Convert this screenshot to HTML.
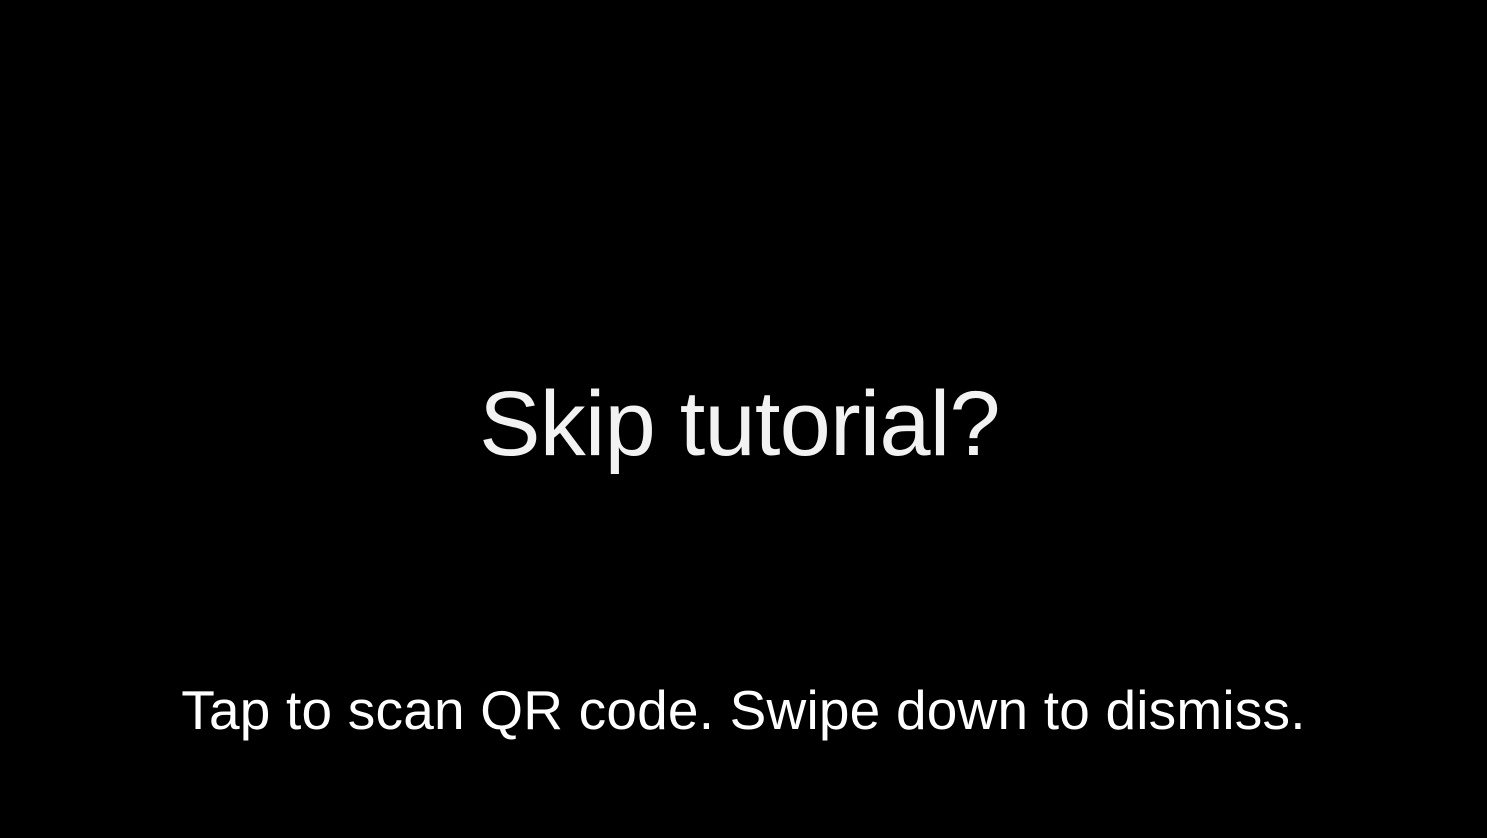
<!DOCTYPE html>
<html><head><meta charset="utf-8"><style>
html,body{margin:0;padding:0;background:#000;width:1487px;height:838px;overflow:hidden}
div{position:absolute;left:0;width:1487px;text-align:center;color:#fff;font-family:"Liberation Sans",sans-serif;line-height:1;white-space:nowrap}
.t{top:378px;font-size:92px;color:#f2f2f2;letter-spacing:-0.8px;left:-4px}
.b{top:683px;font-size:55px;left:0px;letter-spacing:0.2px}
</style></head><body>
<div class="t">Skip tutorial?</div>
<div class="b">Tap to scan QR code. Swipe down to dismiss.</div>
</body></html>
